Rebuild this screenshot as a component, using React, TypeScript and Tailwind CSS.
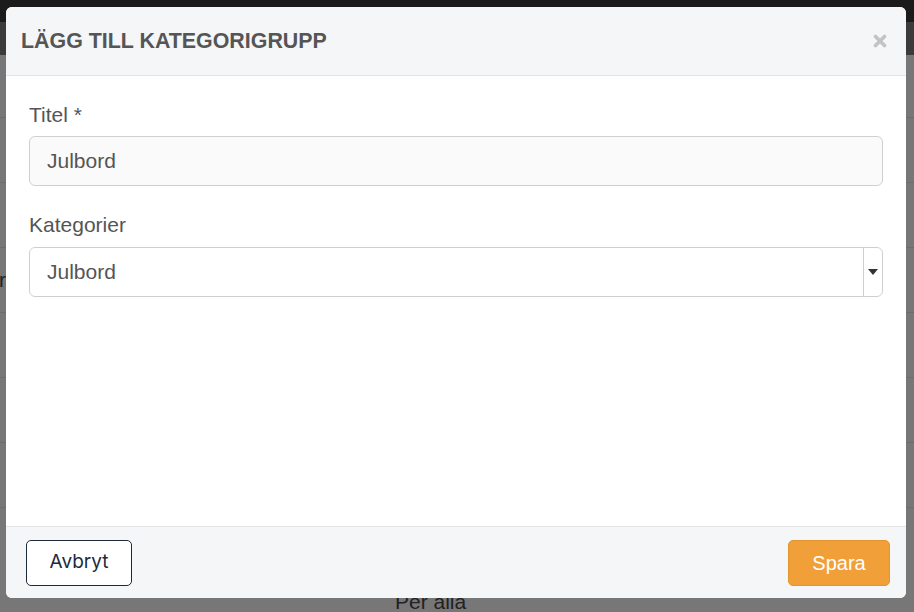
import React from 'react';

const rows = [0, 1, 2, 3, 4, 5];

function CloseIcon() {
  return (
    <svg width="14" height="14" viewBox="0 0 14 14" aria-hidden="true">
      <path d="M2.5 2.5 L11.5 11.5 M11.5 2.5 L2.5 11.5" stroke="#c3c3c3" strokeWidth="3.6" strokeLinecap="round" />
    </svg>
  );
}

function Backdrop() {
  return (
    <div className="flex h-full w-full flex-col bg-[#777777]">
      <div className="h-[22px] bg-[#1b1b1b]" />
      <div className="h-[33px] bg-[#3b3b3b]" />
      <div className="h-[63px] border-b border-[#6c6c6c]" />
      {rows.map((row) => (
        <div key={row} className="flex h-[65px] items-center border-b border-[#6c6c6c]">
          {row === 2 && (
            <div className="flex w-[6px] justify-end overflow-hidden">
              <span className="whitespace-nowrap text-[21px] text-[#222]">Sorter</span>
            </div>
          )}
        </div>
      ))}
      <div className="flex flex-1 items-end justify-start pl-[395px]">
        <span className="translate-y-[2px] text-[21px] leading-[24px] text-[#222]">Per alla</span>
      </div>
    </div>
  );
}

export default function App() {
  return (
    <div
      className="relative h-[612px] w-[914px] overflow-hidden"
      style={{ fontFamily: '"Liberation Sans", Arial, sans-serif' }}
    >
      <Backdrop />

      <div className="absolute left-[6px] top-[7px] flex h-[591px] w-[900px] flex-col overflow-hidden rounded-[6px] bg-white">
        <div className="flex h-[69px] shrink-0 items-center justify-between border-b border-[#e2e4e7] bg-[#f5f6f8] pl-[15px] pr-[19px]">
          <h2 className="text-[21.4px] font-bold leading-[24px] text-[#555]">LÄGG TILL KATEGORIGRUPP</h2>
          <button className="flex h-[20px] w-[14px] items-center justify-center">
            <CloseIcon />
          </button>
        </div>

        <div className="flex-1 px-[23px] pt-[27px]">
          <label className="mb-[9px] block text-[21px] leading-[24px] text-[#555]">Titel *</label>
          <div className="flex h-[50px] items-center rounded-[6px] border border-[#cfcfcf] bg-[#fafafa] pl-[17px] text-[21px] leading-[24px] text-[#555]">
            Julbord
          </div>

          <label className="mb-[10px] mt-[27px] block text-[21px] leading-[24px] text-[#555]">Kategorier</label>
          <div className="flex h-[50px] items-stretch rounded-[6px] border border-[#cfcfcf] bg-white text-[21px] leading-[24px] text-[#555]">
            <div className="flex flex-1 items-center pl-[17px]">Julbord</div>
            <div className="flex w-[19px] items-center justify-center border-l border-[#cfcfcf]">
              <svg width="10" height="6" viewBox="0 0 10 6" aria-hidden="true">
                <path d="M0 0 H10 L5 6 Z" fill="#333" />
              </svg>
            </div>
          </div>
        </div>

        <div className="flex h-[72px] shrink-0 items-center justify-between border-t border-[#e2e4e7] bg-[#f5f6f8] pl-[20px] pr-[16px]">
          <button
            className="flex h-[46px] w-[106px] items-center justify-center rounded-[5px] border border-[#1c2a3c] bg-white text-[19px] text-[#1c2a3c]"
            style={{ fontFamily: 'Inter, "Liberation Sans", sans-serif' }}
          >
            Avbryt
          </button>
          <button className="flex h-[46px] w-[102px] items-center justify-center rounded-[5px] border border-[#e3952f] bg-[#f19f39] text-[20px] text-white">
            Spara
          </button>
        </div>
      </div>
    </div>
  );
}
